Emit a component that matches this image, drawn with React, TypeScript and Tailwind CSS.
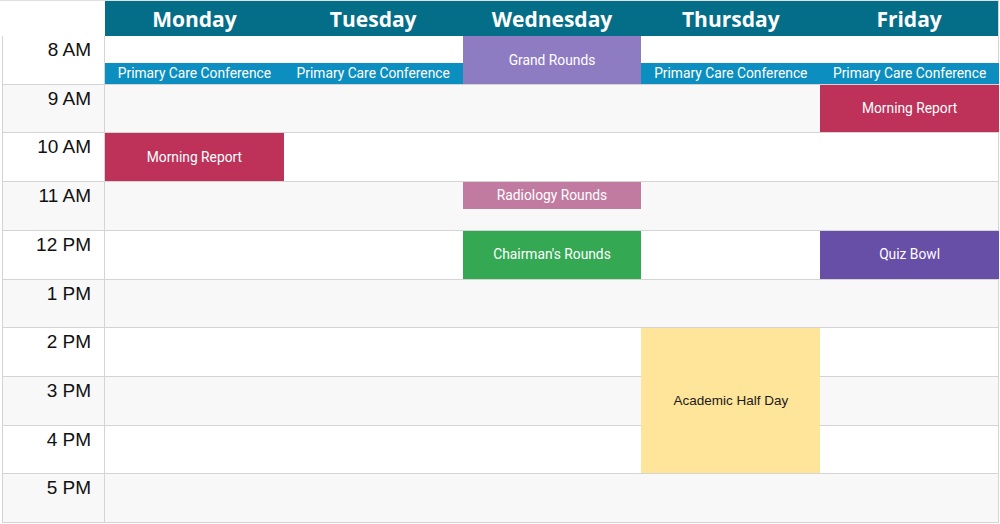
import React from "react";

const days = ["Monday", "Tuesday", "Wednesday", "Thursday", "Friday"];

const times = [
  { label: "8 AM", cls: "row-start-2 bg-white" },
  { label: "9 AM", cls: "row-start-3 bg-[#f8f8f8]" },
  { label: "10 AM", cls: "row-start-4 bg-white" },
  { label: "11 AM", cls: "row-start-5 bg-[#f8f8f8]" },
  { label: "12 PM", cls: "row-start-6 bg-white" },
  { label: "1 PM", cls: "row-start-7 bg-[#f8f8f8]" },
  { label: "2 PM", cls: "row-start-8 bg-white" },
  { label: "3 PM", cls: "row-start-9 bg-[#f8f8f8]" },
  { label: "4 PM", cls: "row-start-10 bg-white" },
  { label: "5 PM", cls: "row-start-11 bg-[#f8f8f8]" },
];

const rowBgs = [
  "row-start-2 bg-white",
  "row-start-3 bg-[#f8f8f8]",
  "row-start-4 bg-white",
  "row-start-5 bg-[#f8f8f8]",
  "row-start-6 bg-white",
  "row-start-7 bg-[#f8f8f8]",
  "row-start-8 bg-white",
  "row-start-9 bg-[#f8f8f8]",
  "row-start-10 bg-white",
  "row-start-11 bg-[#f8f8f8]",
];

const headerCols = [
  "col-start-2",
  "col-start-3",
  "col-start-4",
  "col-start-5",
  "col-start-6",
];

type Ev = { title: string; cls: string; dark?: boolean };

const events: Ev[] = [
  { title: "Primary Care Conference", cls: "col-start-2 row-start-2 self-end h-[21px] bg-[#0c8fc0]" },
  { title: "Primary Care Conference", cls: "col-start-3 row-start-2 self-end h-[21px] bg-[#0c8fc0]" },
  { title: "Grand Rounds", cls: "col-start-4 row-start-2 bg-[#8e7cc3]" },
  { title: "Primary Care Conference", cls: "col-start-5 row-start-2 self-end h-[21px] bg-[#0c8fc0]" },
  { title: "Primary Care Conference", cls: "col-start-6 row-start-2 self-end h-[21px] bg-[#0c8fc0]" },
  { title: "Morning Report", cls: "col-start-6 row-start-3 bg-[#be3159]" },
  { title: "Morning Report", cls: "col-start-2 row-start-4 bg-[#be3159]" },
  { title: "Radiology Rounds", cls: "col-start-4 row-start-5 self-start h-[27px] bg-[#c27ba0]" },
  { title: "Chairman's Rounds", cls: "col-start-4 row-start-6 bg-[#34a853]" },
  { title: "Quiz Bowl", cls: "col-start-6 row-start-6 bg-[#674ea7]" },
  { title: "Academic Half Day", cls: "col-start-5 row-start-8 row-span-3 bg-[#ffe599]", dark: true },
];

export default function App() {
  return (
    <div className="w-[1000px] h-[524px] bg-white overflow-hidden">
      <div className="grid grid-cols-[105px_repeat(5,minmax(0,1fr))] grid-rows-[35px_repeat(10,minmax(0,1fr))] w-[999px] h-[523px] border-t border-[#e0e0e0]">
        {/* Header */}
        <div className="col-start-1 row-start-1 bg-white" />
        {days.map((d, i) => (
          <div
            key={d}
            className={`${headerCols[i]} row-start-1 bg-[#046e88] flex items-center justify-center text-white text-[21px] font-bold pt-[3px] ${i === 4 ? "border-r border-[#d4d4d4]" : ""}`}
            style={{ fontFamily: '"Open Sans", sans-serif' }}
          >
            {d}
          </div>
        ))}

        {/* Time column */}
        {times.map((t) => (
          <div
            key={t.label}
            className={`${t.cls} col-start-1 ml-[2px] border-l border-r border-b border-[#d4d4d4] text-right pr-[13px] pt-[3px] text-[19px] leading-[22px] text-[#111]`}
            style={{ fontFamily: '"Liberation Sans", Arial, sans-serif' }}
          >
            {t.label}
          </div>
        ))}

        {/* Row backgrounds */}
        {rowBgs.map((c, i) => (
          <div key={i} className={`${c} col-start-2 col-span-5 border-b border-r border-[#d4d4d4]`} />
        ))}

        {/* Events */}
        {events.map((e, i) => (
          <div
            key={i}
            className={`${e.cls} mb-[1px] flex items-center justify-center ${
              e.dark ? "text-[#1a1a1a] text-[13.5px]" : "text-white text-[13.8px]"
            }`}
            style={{
              fontFamily: e.dark
                ? '"Liberation Sans", Arial, sans-serif'
                : 'Roboto, "Liberation Sans", sans-serif',
            }}
          >
            {e.title}
          </div>
        ))}
      </div>
    </div>
  );
}
